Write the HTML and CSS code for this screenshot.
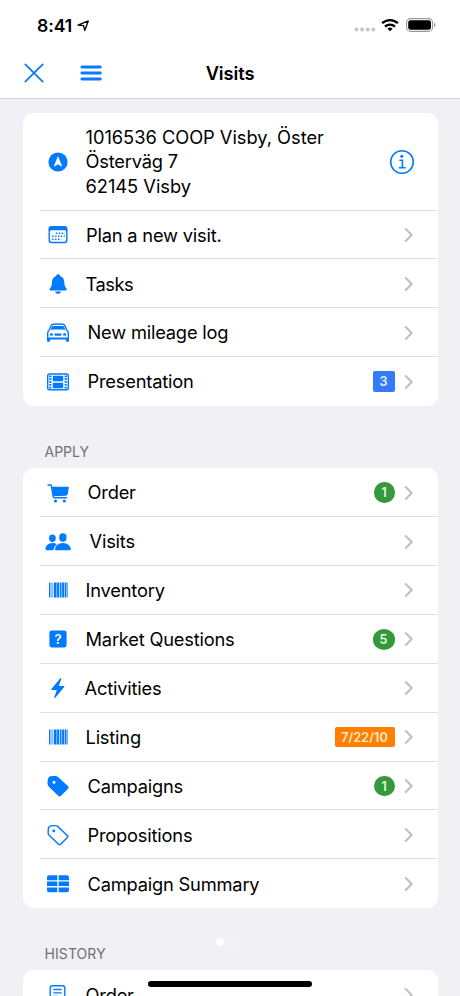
FILE: index.html
```html
<!DOCTYPE html>
<html lang="en">
<head>
<meta charset="utf-8">
<title>Visits</title>
<link rel="stylesheet" href="styles.css">
</head>
<body>
<svg class="defs" aria-hidden="true">
  <symbol id="chevron" viewBox="0 0 10 16"><path d="M1.7 2l6 6-6 6" fill="none" stroke="#c0c0c3" stroke-width="2.1" stroke-linecap="round" stroke-linejoin="round"/></symbol>
  <symbol id="barcode" viewBox="0 0 30 30"><path d="M6 7.5h1.400v15H6zM8.600 7.500h.9v15h-.9zM10.800 7.500h2.800v15h-2.800zM14.100 7.500h2v15h-2zM16.800 7.500h1.700v15h-1.700zM19.100 7.500h2.200v15h-2.200zM21.900 7.500h1.100v15h-1.100zM23.500 7.500h1.100v15h-1.100z"/></symbol>
</svg>
<div class="screen">
  <header class="top">
    <div class="status">
      <span class="time">8:41</span>
      <svg class="loc" viewBox="0 0 14 14"><path d="M2 6.200L12.300 1.900 8.700 11.600 7.600 6.700z" fill="none" stroke="#000" stroke-width="1.300" stroke-linejoin="round"/></svg>
      <svg class="signal" viewBox="0 0 22 5"><g fill="#c6c6c6"><circle cx="2.5" cy="2.5" r="2"/><circle cx="8.1" cy="2.5" r="2"/><circle cx="13.7" cy="2.5" r="2"/><circle cx="19.3" cy="2.5" r="2"/></g></svg>
      <svg class="wifi" viewBox="0 0 18 14"><g fill="none" stroke="#000" stroke-width="2.3"><path d="M1.1 5.3a11.3 11.3 0 0 1 15.8 0"/><path d="M4 8.6a7.2 7.2 0 0 1 10 0"/></g><path d="M9 13.3L6.4 10.8a3.8 3.8 0 0 1 5.2 0z"/></svg>
      <svg class="battery" viewBox="0 0 30 14"><rect x=".6" y=".6" width="26" height="12.8" rx="4" fill="none" stroke="#999" stroke-width="1.1"/><rect x="2.2" y="2.2" width="22.8" height="9.6" rx="2.3"/><path d="M28 4.8c1.9.7 1.9 3.7 0 4.4z" fill="#999"/></svg>
    </div>
    <div class="nav">
      <svg class="close" viewBox="0 0 20 20"><path d="M1.3 1.3l17.4 17.4M18.7 1.3L1.3 18.7" stroke="#007aff" stroke-width="1.7" stroke-linecap="round"/></svg>
      <svg class="menu" viewBox="0 0 22 18"><path d="M1.9 3h18.4M1.9 9h18.4M1.9 15h18.4" stroke="#0a7aff" stroke-width="2.9" stroke-linecap="round"/></svg>
      <h1 class="title">Visits</h1>
    </div>
  </header>

  <main class="content">
    <section class="card">
      <div class="row address">
        <svg class="icon" viewBox="0 0 30 30"><circle cx="15" cy="15" r="9.6"/><path d="M15 9.7l3.8 9.6-3.8-2.2-3.8 2.2z" fill="#fff" stroke="#fff" stroke-width=".6" stroke-linejoin="round"/></svg>
        <div class="cell"><p class="label"><span class="store">1016536 COOP Visby, Öster</span><br>Österväg 7<br><span class="city">62145 Visby</span></p>
          <svg class="info" viewBox="0 0 26 26"><circle cx="13" cy="13" r="11.3" fill="none" stroke="#007aff" stroke-width="1.6"/><circle cx="12.8" cy="7.3" r="1.5"/><path d="M10.4 11.2h3v7.4M9.8 18.7h6.8" fill="none" stroke="#007aff" stroke-width="1.6"/></svg>
        </div>
      </div>
      <div class="row">
        <svg class="icon" viewBox="0 0 30 30"><path fill-rule="evenodd" d="M8.4 6h13.2a2.9 2.9 0 0 1 2.9 2.900v11.400a2.900 2.900 0 0 1-2.900 2.900H8.400a2.900 2.900 0 0 1-2.900-2.900V8.900A2.900 2.900 0 0 1 8.400 6zM8.600 10.300c-1.200 0-1.700.5-1.700 1.600v8.100c0 1.200.6 1.800 1.800 1.800h12.600c1.200 0 1.800-.6 1.800-1.800v-8.100c0-1.100-.5-1.600-1.700-1.600z"/><path d="M12.800 13.200h9M9.200 16.200h12.600M9.200 19.200h9" stroke="#007aff" stroke-width="1.500" stroke-dasharray="1.500 1.400"/></svg>
        <div class="cell in1"><p class="label">Plan a new visit.</p><svg class="chev"><use href="#chevron"/></svg></div>
      </div>
      <div class="row">
        <svg class="icon" viewBox="0 0 30 30"><path d="M15 5.300c1.200 0 2 .7 2.200 1.700 2.600.9 4 3 4.100 6 .1 3.500.8 4.800 2 6.200.7.800.6 2.200-.6 2.200H7.600c-1.200 0-1.300-1.400-.6-2.200 1.200-1.400 1.900-2.700 2-6.200.1-3 1.500-5.100 4.100-6 .2-1 .8-1.700 1.900-1.700zM12.100 22.500h5.900c-.3 1.500-1.500 2.300-2.950 2.300s-2.650-.8-2.950-2.300z"/></svg>
        <div class="cell"><p class="label tight">Tasks</p><svg class="chev"><use href="#chevron"/></svg></div>
      </div>
      <div class="row">
        <svg class="icon" viewBox="0 0 30 30"><path d="M4.700 22v-6.700c0-1.600.6-2.800 1.700-3.600l1.700-4c.4-.9 1-1.300 2-1.400 3.200-.4 6.600-.4 9.800 0 1 .1 1.600.5 2 1.400l1.700 4c1.100.8 1.700 2 1.700 3.600V22" fill="none" stroke="#007aff" stroke-width="1.400"/><path d="M10 8h10c.5 0 .9.200 1.100.7l1.200 3.100c-4.700-.5-9.900-.5-14.600 0l1.200-3.100c.2-.5.600-.7 1.100-.7zM4 19.500h22v3.200c0 .7-.4 1-1 1h-1c-.6 0-1-.3-1-1v-1.300H7v1.300c0 .7-.4 1-1 1H5c-.6 0-1-.3-1-1z"/><ellipse cx="8.400" cy="16.500" rx="1.600" ry="1.300"/><ellipse cx="21.600" cy="16.500" rx="1.600" ry="1.300"/><rect x="11.300" y="15.400" width="7.400" height="2.300" rx="1.100"/></svg>
        <div class="cell in2"><p class="label">New mileage log</p><svg class="chev"><use href="#chevron"/></svg></div>
      </div>
      <div class="row">
        <svg class="icon" viewBox="0 0 30 30"><rect x="4.700" y="7" width="20.600" height="15.800" rx="1.800" fill="none" stroke="#007aff" stroke-width="1.400"/><rect x="9.800" y="8.700" width="10.400" height="5.500" rx=".7"/><rect x="9.800" y="15.700" width="10.400" height="5.500" rx=".7"/><path d="M7.300 8.500v13.200M22.700 8.500v13.200" stroke="#007aff" stroke-width="2.300" stroke-dasharray="1.700 1.100"/></svg>
        <div class="cell in2"><p class="label">Presentation</p><span class="badge blue">3</span><svg class="chev"><use href="#chevron"/></svg></div>
      </div>
    </section>

    <h2 class="heading">APPLY</h2>
    <section class="card">
      <div class="row">
        <svg class="icon" viewBox="0 0 30 30"><path d="M8.700 8.800h16.200c.7 0 1 .4.900 1l-1 6c-.2 1.200-.9 1.800-2 1.900l-12.400.6z"/><path d="M5 7h2.300c.7 0 1 .3 1.100.9l1.700 10.600c.1.800.6 1.200 1.300 1.200h12.100" fill="none" stroke="#007aff" stroke-width="1.400" stroke-linecap="round"/><circle cx="12.500" cy="23" r="1.600"/><circle cx="21.300" cy="23" r="1.600"/></svg>
        <div class="cell in2"><p class="label">Order</p><span class="badge green">1</span><svg class="chev"><use href="#chevron"/></svg></div>
      </div>
      <div class="row">
        <svg class="icon" viewBox="0 0 30 30"><ellipse cx="9.400" cy="11.300" rx="3.300" ry="3.700"/><ellipse cx="19.900" cy="10.500" rx="3.700" ry="4.200"/><path d="M4 23.300c-1 0-1.500-.5-1.500-1.400 0-2.900 3-5.800 6.900-5.800 1.700 0 3.200.5 4.300 1.300-2 1.500-3.200 3.500-2.900 5.900zM13.600 23.300c-1.200 0-1.600-.5-1.600-1.300 0-2.600 3-6.100 7.900-6.100s7.900 3.500 7.900 6.100c0 .8-.4 1.300-1.600 1.300z"/></svg>
        <div class="cell in4"><p class="label">Visits</p><svg class="chev"><use href="#chevron"/></svg></div>
      </div>
      <div class="row">
        <svg class="icon"><use href="#barcode"/></svg>
        <div class="cell"><p class="label">Inventory</p><svg class="chev"><use href="#chevron"/></svg></div>
      </div>
      <div class="row">
        <svg class="icon" viewBox="0 0 30 30"><rect x="6.400" y="6.500" width="17.200" height="17" rx="2.400"/><text class="qmark" x="15" y="19.600" text-anchor="middle">?</text></svg>
        <div class="cell"><p class="label">Market Questions</p><span class="badge green wide">5</span><svg class="chev"><use href="#chevron"/></svg></div>
      </div>
      <div class="row">
        <svg class="icon" viewBox="0 0 30 30"><path d="M17.300 5.300L8.500 16c-.4.600-.1 1 .4 1h4.900l-2.500 7.200c-.3.900.5 1.200 1 .6l8.900-10.700c.4-.6.1-1-.4-1h-5l2.500-7.200c.3-.9-.5-1.200-1-.6z"/></svg>
        <div class="cell in0"><p class="label">Activities</p><svg class="chev"><use href="#chevron"/></svg></div>
      </div>
      <div class="row">
        <svg class="icon"><use href="#barcode"/></svg>
        <div class="cell"><p class="label">Listing</p><span class="badge orange">7/22/10</span><svg class="chev"><use href="#chevron"/></svg></div>
      </div>
      <div class="row">
        <svg class="icon" viewBox="0 0 30 30"><path fill-rule="evenodd" d="M4.600 9.800c0-3 1.800-4.800 4.700-4.800h3.300c1 0 1.700.3 2.400.9l9.900 9c1 .9 1 1.900.1 2.800L18 24.800c-.9.900-1.900.9-2.800 0L5.700 15.600c-.7-.7-1.100-1.500-1.100-2.500zM11 9.700a1.500 1.500 0 1 0 0 3 1.500 1.500 0 0 0 0-3z"/></svg>
        <div class="cell in2"><p class="label">Campaigns</p><span class="badge green">1</span><svg class="chev"><use href="#chevron"/></svg></div>
      </div>
      <div class="row">
        <svg class="icon" viewBox="0 0 30 30"><path d="M5.200 9.900c0-2.800 1.500-4.300 4.200-4.300h3.200c.8 0 1.400.3 2 .8l9.700 9c.8.700.8 1.400.1 2.100l-6.800 6.800c-.7.700-1.400.7-2.100 0L6.200 15.200c-.6-.6-1-1.200-1-2z" fill="none" stroke="#007aff" stroke-width="1.400"/><circle cx="10.800" cy="10.900" r="1.400"/></svg>
        <div class="cell in2"><p class="label">Propositions</p><svg class="chev"><use href="#chevron"/></svg></div>
      </div>
      <div class="row">
        <svg class="icon" viewBox="0 0 30 30"><path d="M6.500 6.300h7.800v4.900H4V8.800c0-1.700.8-2.500 2.500-2.500zM15.700 6.300h7.800c1.700 0 2.500.8 2.500 2.500v2.400H15.700zM4 12.600h10.300v4.400H4zM15.700 12.600H26v4.400H15.700zM4 18.400h10.300v4.900H6.500c-1.700 0-2.500-.8-2.500-2.500zM15.700 18.400H26v2.400c0 1.700-.8 2.500-2.500 2.500h-7.800z"/></svg>
        <div class="cell in2"><p class="label">Campaign Summary</p><svg class="chev"><use href="#chevron"/></svg></div>
      </div>
    </section>

    <h2 class="heading history">HISTORY</h2>
    <section class="card">
      <div class="row">
        <svg class="icon" viewBox="0 0 30 30"><rect x="7.200" y="5.800" width="14.600" height="19" rx="2.200" fill="none" stroke="#007aff" stroke-width="1.400"/><path d="M10.300 9.500h8.400M10.300 12.900h8.400M10.300 16.300h5" stroke="#007aff" stroke-width="1.300"/></svg>
        <div class="cell"><p class="label">Order</p><svg class="chev"><use href="#chevron"/></svg></div>
      </div>
    </section>
  </main>
  <div class="pager"></div>
  <div class="home"></div>
</div>
</body>
</html>
```
FILE: styles.css
```css
* { box-sizing: border-box; }
body { margin: 0; font-family: Inter, "Liberation Sans", sans-serif; color: #000; }
h1, h2, p { margin: 0; font-weight: 400; }
svg { display: block; flex: none; }
.defs { position: absolute; width: 0; height: 0; }
.screen { position: relative; width: 460px; height: 996px; overflow: hidden; background: #f0f0f5; }

.top { height: 98.5px; background: #fff; border-bottom: 1px solid #d5d5d9; }
.status { height: 49px; display: flex; align-items: center; padding: 2px 25px 0 37px; }
.time { font-size: 17.6px; font-weight: 600; letter-spacing: -0.1px; }
.loc { width: 14px; height: 14px; margin-left: 4px; }
.signal { width: 22px; height: 5px; margin: 8px 5.5px 0 auto; }
.wifi { width: 18px; height: 14px; margin: -1px 7px 0 0; }
.battery { width: 30px; height: 14px; margin: -1px -1px 0 0; }
.nav { height: 48px; display: grid; grid-template-columns: 57px 1fr; align-items: center; padding-left: 24px; }
.close { grid-area: 1 / 1; width: 20px; height: 20px; }
.menu { grid-area: 1 / 2; width: 22px; height: 18px; margin-left: -1px; }
.title { grid-row: 1; grid-column: 1 / 3; margin-left: -24px; text-align: center; font-size: 18.3px; font-weight: 600; letter-spacing: -0.1px; }

.content { padding: 14px 22.5px 0; }
.card { background: #fff; border-radius: 11px; overflow: hidden; }
.row { height: 48.9px; display: flex; align-items: center; padding-left: 20.5px; }
.row.address { height: 98px; }
.icon { width: 30px; height: 30px; fill: #007aff; }
.cell { position: relative; flex: 1; height: 100%; display: flex; align-items: center; padding: 0 24px 0 12.5px; }
.row:not(:last-child) .cell::after { content: ""; position: absolute; left: -33px; right: 0; bottom: 0; height: 1px; background: #dedee1; }
.cell.in0 { padding-left: 11.5px; }
.cell.in1 { padding-left: 13px; }
.cell.in2 { padding-left: 14.5px; }
.cell.in4 { padding-left: 16.5px; }
.label { flex: 1; font-size: 18.3px; line-height: 24.5px; letter-spacing: -0.2px; white-space: nowrap; }
.store { letter-spacing: -0.03px; }
.city { letter-spacing: -0.03px; }
.tight { letter-spacing: -0.45px; }
.info { width: 26px; height: 26px; fill: #007aff; margin-right: -1px; }
.chev { width: 10px; height: 16px; }
.badge { height: 20.5px; min-width: 20.5px; margin-right: 9px; display: flex; align-items: center; justify-content: center; color: #e9f5e9; font-size: 12.5px; font-weight: 600; }
.green { background: #34993a; border-radius: 50%; }
.wide { width: 22px; }
.blue { width: 22px; background: #337bfb; border-radius: 2px; }
.orange { width: 60px; background: #ff8000; color: #ffe8cf; border-radius: 2px; letter-spacing: 0.1px; }
.qmark { font-size: 13px; font-weight: 600; fill: #fff; }
.heading { height: 62.2px; padding: 35px 0 0 22px; font-size: 14px; line-height: 21px; color: #707075; }
.history { padding-top: 34.5px; letter-spacing: 0.08px; }

.pager { position: absolute; left: 216px; top: 938px; width: 8px; height: 8px; border-radius: 50%; background: #fff; }
.pager::after { content: ""; position: absolute; left: 7px; top: 5px; width: 17px; height: 2px; background: #f6f6f9; }
.home { position: absolute; left: 148px; top: 981px; width: 164px; height: 6px; border-radius: 3px; background: #000; }
```
